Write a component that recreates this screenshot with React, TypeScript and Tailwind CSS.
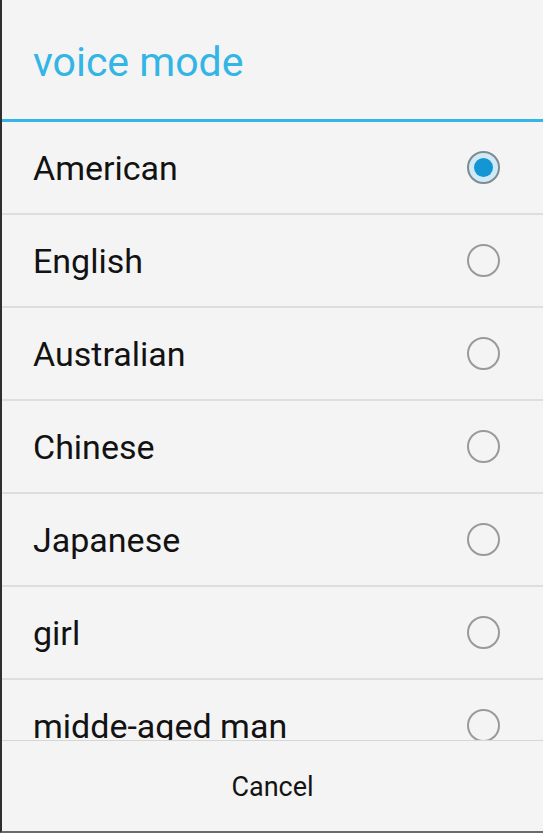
import { useState } from "react";

const modes = ["American", "English", "Australian", "Chinese", "Japanese", "girl", "midde-aged man"];

function Radio({ checked }: { checked: boolean }) {
  if (checked) {
    return (
      <span className="flex h-[33px] w-[33px] items-center justify-center rounded-full border-2 border-[#7d8b93] bg-[#cfe9f5]">
        <span className="h-[19px] w-[19px] rounded-full bg-[#1396d3]" />
      </span>
    );
  }
  return <span className="h-[33px] w-[33px] rounded-full border-2 border-[#9a9a9a]" />;
}

export default function App() {
  const [selected, setSelected] = useState(0);

  return (
    <div
      className="flex h-[833px] w-[543px] flex-col overflow-hidden border-b-2 border-l-2 border-b-[#6a6a6a] border-l-[#2e2e2e] bg-[#f4f4f4]"
      style={{ fontFamily: "Roboto, 'Noto Sans', sans-serif" }}
    >
      <div className="flex h-[119px] shrink-0 items-center pl-[31px] pt-[7px] text-[41px] text-[#33b5e5]">
        voice mode
      </div>
      <div className="h-[3px] shrink-0 bg-[#33b5e5]" />

      <div className="flex-1 overflow-hidden">
        {modes.map((mode, i) => (
          <div
            key={mode}
            onClick={() => setSelected(i)}
            className="flex h-[93px] items-center justify-between border-b-2 border-[#dedede] pl-[31px] pr-[43px] text-[34px] text-[#121212]"
          >
            <span className="pt-[2px]">{mode}</span>
            <Radio checked={selected === i} />
          </div>
        ))}
      </div>

      <div className="flex h-[91px] shrink-0 items-center justify-center border-t border-[#d6d6d6] pt-[3px] text-[27px] text-[#141414]">
        Cancel
      </div>
    </div>
  );
}
